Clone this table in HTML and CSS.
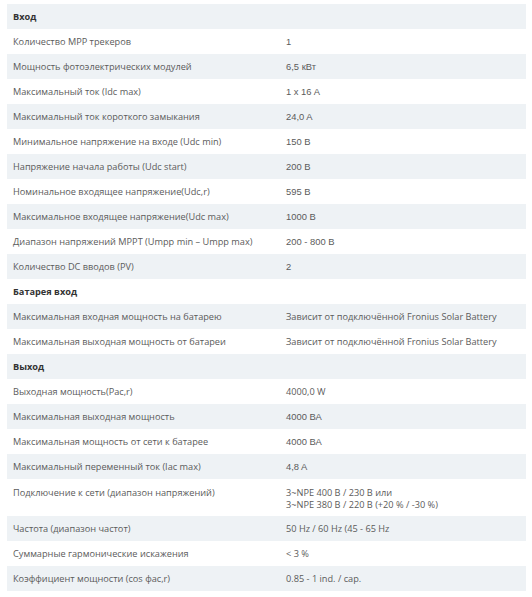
FILE: index.html
```html
<!DOCTYPE html>
<html lang="ru">
<head>
<meta charset="UTF-8">
<title>Технические характеристики</title>
<link rel="stylesheet" href="styles.css">
</head>
<body>
<table class="specs">
  <tbody>
    <tr class="group"><td colspan="2">Вход</td></tr>
    <tr><td>Количество MPP трекеров</td><td class="num">1</td></tr>
    <tr><td>Мощность фотоэлектрических модулей</td><td class="num">6,5 кВт</td></tr>
    <tr><td>Максимальный ток (Idc max)</td><td class="num">1 x 16 A</td></tr>
    <tr><td>Максимальный ток короткого замыкания</td><td class="num">24,0 A</td></tr>
    <tr><td>Минимальное напряжение на входе (Udc min)</td><td class="num">150 В</td></tr>
    <tr><td>Напряжение начала работы (Udc start)</td><td class="num">200 В</td></tr>
    <tr><td>Номинальное входящее напряжение(Udc,r)</td><td class="num">595 В</td></tr>
    <tr><td>Максимальное входящее напряжение(Udc max)</td><td class="num">1000 В</td></tr>
    <tr><td>Диапазон напряжений MPPT (Umpp min – Umpp max)</td><td class="num">200 - 800 В</td></tr>
    <tr><td>Количество DC вводов (PV)</td><td class="num">2</td></tr>
    <tr class="group"><td colspan="2">Батарея вход</td></tr>
    <tr><td>Максимальная входная мощность на батарею</td><td>Зависит от подключённой Fronius Solar Battery</td></tr>
    <tr><td>Максимальная выходная мощность от батареи</td><td>Зависит от подключённой Fronius Solar Battery</td></tr>
    <tr class="group"><td colspan="2">Выход</td></tr>
    <tr><td>Выходная мощность(Pac,r)</td><td>4000,0 W</td></tr>
    <tr><td>Максимальная выходная мощность</td><td class="num">4000 ВА</td></tr>
    <tr><td>Максимальная мощность от сети к батарее</td><td class="num">4000 ВА</td></tr>
    <tr><td>Максимальный переменный ток (Iac max)</td><td class="num">4,8 A</td></tr>
    <tr class="tall"><td>Подключение к сети (диапазон напряжений)</td><td>3~NPE 400 В / 230 В или<br>3~NPE 380 В / 220 В (+20 % / -30 %)</td></tr>
    <tr><td>Частота (диапазон частот)</td><td>50 Hz / 60 Hz (45 - 65 Hz</td></tr>
    <tr><td>Суммарные гармонические искажения</td><td>&lt; 3 %</td></tr>
    <tr><td>Коэффициент мощности (cos фac,r)</td><td>0.85 - 1 ind. / cap.</td></tr>
  </tbody>
</table>
</body>
</html>
```
FILE: styles.css
```css
* {
  margin: 0;
  padding: 0;
  box-sizing: border-box;
}

body {
  padding: 4px 6px 0 7px;
  background: #fff;
  font-family: "Open Sans", "Noto Sans", sans-serif;
  font-size: 9.2px;
  color: #5b5b5b;
}

.specs {
  width: 519px;
  border-collapse: collapse;
}

.specs td {
  padding: 6px 6px;
  line-height: 13px;
  height: 25px;
  vertical-align: top;
}

.specs td:first-child {
  width: 273px;
}

.specs tr:nth-child(odd) {
  background-color: #eef2f5;
}

.specs .group td {
  font-weight: bold;
  color: #333;
}

.specs .num {
  font-family: "Liberation Sans", Arial, sans-serif;
  font-size: 9.4px;
}

.specs .tall td {
  height: auto;
  padding-top: 8px;
  padding-bottom: 5px;
  line-height: 12px;
}
```
